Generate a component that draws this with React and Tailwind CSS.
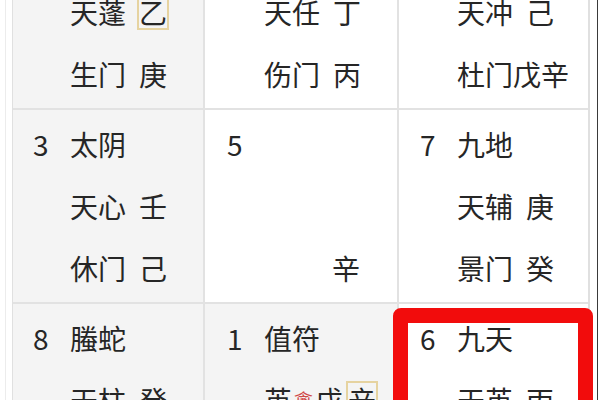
import React from "react";

const font = { fontFamily: '"Noto Sans CJK SC", "Noto Sans", sans-serif' };

function Boxed({ children }) {
  return (
    <span className="inline-block border-2 border-[#e6d3a0] leading-[32px] ml-[11px]">
      {children}
    </span>
  );
}

function Line({ children, num }) {
  return (
    <div className="flex items-center h-[62px]">
      <span className="w-[37px] shrink-0">{num || ""}</span>
      <div className="flex items-center">{children}</div>
    </div>
  );
}

function Cell({ num, god, l2, l3, bg, pl = "pl-[20px]" }) {
  return (
    <div className={`${bg} ${pl} pt-[3px] text-[28px] text-[#262626]`}>
      <Line num={num}>
        <span>{god}</span>
      </Line>
      <Line>{l2}</Line>
      <Line>{l3}</Line>
    </div>
  );
}

const Gap = () => <span className="inline-block w-[13px]" />;

export default function App() {
  return (
    <div className="relative w-[600px] h-[400px] overflow-hidden bg-white" style={font}>
      <div className="flex h-full">
        <div className="w-[5px] shrink-0" />
        <div className="w-[1px] shrink-0 bg-[#ececec]" />
        <div className="w-[6px] shrink-0" />
        <div className="shrink-0 -mt-[84px] h-[600px] border-l border-r-2 border-[#e0e0e0] bg-[#e2e2e2] grid grid-cols-[190px_192px_189px] grid-rows-[192px_192px_192px] gap-[2px]">
          <Cell
            bg="bg-[#f4f4f4]"
            l2={<><span>天蓬</span><Boxed>乙</Boxed></>}
            l3={<><span>生门</span><Gap /><span>庚</span></>}
          />
          <Cell
            bg="bg-white"
            pl="pl-[22px]"
            l2={<><span>天任</span><Gap /><span>丁</span></>}
            l3={<><span>伤门</span><Gap /><span>丙</span></>}
          />
          <Cell
            bg="bg-white"
            pl="pl-[21px]"
            l2={<><span>天冲</span><Gap /><span>己</span></>}
            l3={<><span>杜门戊辛</span></>}
          />
          <Cell
            bg="bg-[#f4f4f4]"
            num="3"
            god="太阴"
            l2={<><span>天心</span><Gap /><span>壬</span></>}
            l3={<><span>休门</span><Gap /><span>己</span></>}
          />
          <Cell
            bg="bg-white"
            pl="pl-[22px]"
            num="5"
            god=""
            l2={<span />}
            l3={<span className="ml-[68px]">辛</span>}
          />
          <Cell
            bg="bg-white"
            pl="pl-[21px]"
            num="7"
            god="九地"
            l2={<><span>天辅</span><Gap /><span>庚</span></>}
            l3={<><span>景门</span><Gap /><span>癸</span></>}
          />
          <Cell
            bg="bg-[#f4f4f4]"
            num="8"
            god="螣蛇"
            l2={<><span>天柱</span><Gap /><span>癸</span></>}
          />
          <Cell
            bg="bg-[#f4f4f4]"
            pl="pl-[22px]"
            num="1"
            god="值符"
            l2={
              <>
                <span>英</span>
                <span className="text-[19px] text-[#d04848] mx-[2px]">禽</span>
                <span>戊</span>
                <span className="inline-block border-2 border-[#e6d3a0] leading-[34px] ml-[3px]">辛</span>
              </>
            }
          />
          <Cell
            bg="bg-white"
            pl="pl-[21px]"
            num="6"
            god="九天"
            l2={<><span>天英</span><Gap /><span>丙</span></>}
          />
        </div>
        <div className="w-[7px] shrink-0" />
        <div className="w-[1px] shrink-0 bg-[#3a3a3a]" />
      </div>
      <div className="absolute left-[393px] top-[308px] w-[200px] h-[140px] border-[15px] border-[#f20c0c] rounded-[8px]" />
    </div>
  );
}
